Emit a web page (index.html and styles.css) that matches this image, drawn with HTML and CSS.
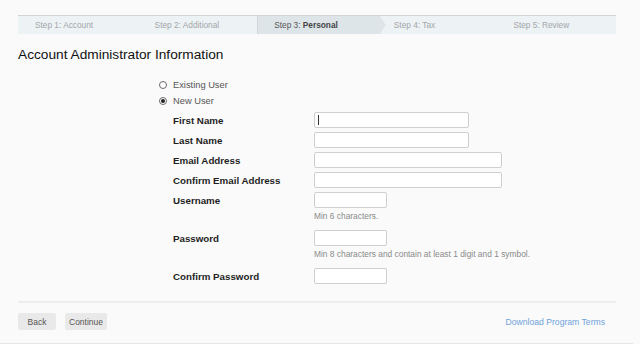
FILE: index.html
```html
<!DOCTYPE html>
<html lang="en">
<head>
<meta charset="utf-8">
<title>Account Administrator Information</title>
<link rel="stylesheet" href="styles.css">
</head>
<body>
<div class="wrap">
  <div class="inner">
    <nav class="steps">
      <div class="step">Step 1: Account</div>
      <div class="step">Step 2: Additional</div>
      <div class="step active">Step 3: <b>Personal</b></div>
      <div class="step">Step 4: Tax</div>
      <div class="step">Step 5: Review</div>
    </nav>

    <h1 class="title">Account Administrator Information</h1>

    <div class="form">
      <label class="radio"><span class="circle"></span>Existing User</label>
      <label class="radio"><span class="circle on"></span>New User</label>

      <div class="row first"><span class="lbl">First Name</span><span class="box w-md"><span class="caret"></span></span></div>
      <div class="row"><span class="lbl">Last Name</span><span class="box w-md"></span></div>
      <div class="row"><span class="lbl">Email Address</span><span class="box w-lg"></span></div>
      <div class="row"><span class="lbl">Confirm Email Address</span><span class="box w-lg"></span></div>
      <div class="row"><span class="lbl">Username</span><span class="box w-sm"></span></div>
      <div class="help">Min 6 characters.</div>
      <div class="row spaced"><span class="lbl">Password</span><span class="box w-sm"></span></div>
      <div class="help">Min 8 characters and contain at least 1 digit and 1 symbol.</div>
      <div class="row spaced"><span class="lbl">Confirm Password</span><span class="box w-sm"></span></div>
    </div>

    <div class="actions">
      <div class="buttons">
        <button class="btn">Back</button>
        <button class="btn">Continue</button>
      </div>
      <a class="terms" href="#">Download Program Terms</a>
    </div>
  </div>
</div>
</body>
</html>
```

FILE: styles.css
```css
html, body {
  margin: 0;
  padding: 0;
  background: #fafafa;
}
body {
  font-family: "Liberation Sans", Arial, sans-serif;
  color: #222;
}
.wrap {
  width: 633px;
  height: 343px;
  border-bottom: 1px solid #e6e6e6;
}
.inner {
  width: 598px;
  margin-left: 18px;
  padding-top: 15px;
}

/* steps */
.steps {
  display: grid;
  grid-template-columns: repeat(5, 1fr);
  height: 18px;
  background: #edf2f5;
  border-top: 1px solid #d2d5d7;
}
.step {
  position: relative;
  padding-left: 17px;
  font-size: 8.3px;
  line-height: 18px;
  color: #a2a6a9;
  white-space: nowrap;
}
.step.active {
  background: #dde5e9;
  color: #555;
  box-shadow: inset 1px 0 0 #d0d8dc;
}
.step.active b {
  font-weight: bold;
  color: #444;
}
.step.active::after {
  content: "";
  position: absolute;
  top: 0;
  left: 100%;
  width: 9px;
  height: 18px;
  background: #dde5e9;
  clip-path: polygon(0 0, 35% 0, 100% 50%, 35% 100%, 0 100%);
}

/* title */
.title {
  margin: 13px 0 0;
  font-size: 13.7px;
  line-height: 16px;
  font-weight: normal;
  color: #111;
}

/* form */
.form {
  margin-top: 14px;
  padding-left: 141px;
}
.radio {
  display: flex;
  align-items: center;
  height: 16px;
  font-size: 9.3px;
  color: #555;
}
.circle {
  box-sizing: border-box;
  width: 8px;
  height: 8px;
  margin-right: 6px;
  border: 1px solid #6b6b6b;
  border-radius: 50%;
  background: #fff;
  display: flex;
  align-items: center;
  justify-content: center;
}
.circle.on::before {
  content: "";
  width: 4px;
  height: 4px;
  border-radius: 50%;
  background: #222;
}
.row {
  display: flex;
  align-items: center;
  height: 16px;
  margin-top: 4px;
  padding-left: 14px;
}
.row.first {
  margin-top: 3px;
}
.row.spaced {
  margin-top: 8px;
}
.lbl {
  width: 141px;
  font-size: 9.75px;
  font-weight: bold;
  color: #1e1e1e;
  white-space: nowrap;
}
.box {
  box-sizing: border-box;
  display: flex;
  align-items: center;
  height: 16px;
  background: #fff;
  border: 1px solid #cfcfcf;
  border-radius: 2px;
  padding-left: 3px;
}
.w-md { width: 155px; }
.w-lg { width: 188px; }
.w-sm { width: 73px; }
.caret {
  width: 1px;
  height: 10px;
  background: #333;
}
.help {
  margin-top: 2px;
  padding-left: 155px;
  font-size: 8.4px;
  line-height: 12px;
  color: #8a8a8a;
  white-space: nowrap;
}

/* actions */
.actions {
  margin-top: 17px;
  border-top: 2px solid #ededed;
  padding-top: 10px;
  display: flex;
  justify-content: space-between;
  align-items: center;
}
.buttons {
  display: flex;
  gap: 9px;
}
.btn {
  min-width: 38px;
  height: 17px;
  padding: 0 4px;
  border: none;
  border-radius: 2px;
  background: #e9e9e9;
  font-family: "Liberation Sans", Arial, sans-serif;
  font-size: 8.5px;
  color: #555;
  text-align: center;
}
.terms {
  margin-right: 11px;
  font-size: 8.65px;
  color: #6fa2da;
  text-decoration: none;
}
```
